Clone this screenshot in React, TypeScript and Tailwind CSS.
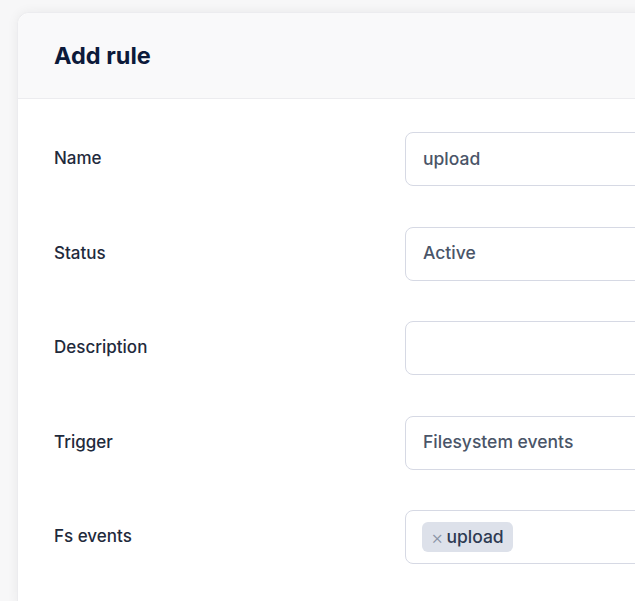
import React from "react";

const fields = [
  { label: "Name", value: "upload" },
  { label: "Status", value: "Active" },
  { label: "Description", value: "" },
  { label: "Trigger", value: "Filesystem events" },
];

export default function App() {
  return (
    <div
      className="min-h-screen w-full overflow-hidden bg-[#f7f7f8] pl-[17px] pt-3"
      style={{ fontFamily: "Inter, 'Noto Sans', sans-serif" }}
    >
      <div className="w-[900px] rounded-tl-xl border border-[#ececef] bg-white shadow-[0_0_12px_rgba(0,0,0,0.06)]">
        {/* Header */}
        <div className="flex h-[86px] items-center rounded-tl-xl border-b border-[#ececef] bg-[#f9f9fa] px-9">
          <h2 className="text-[23.5px] font-bold text-[#0c1a3a]">Add rule</h2>
        </div>

        {/* Form */}
        <div className="flex flex-col gap-[40.5px] px-9 pt-[33px] pb-10">
          {fields.map((f) => (
            <div key={f.label} className="grid grid-cols-[351px_1fr] items-center">
              <span className="text-[17px] font-medium text-[#1f2a3c]">{f.label}</span>
              <div className="flex h-[54px] items-center rounded-lg border border-[#d6d9e4] px-[17px] text-[17.5px] font-medium text-[#4a5568]">
                {f.value}
              </div>
            </div>
          ))}
          <div className="grid grid-cols-[351px_1fr] items-center">
            <span className="text-[17px] font-medium text-[#1f2a3c]">Fs events</span>
            <div className="flex h-[54px] items-center rounded-lg border border-[#d6d9e4] px-4">
              <span className="flex h-[30px] items-center gap-[3px] rounded-md bg-[#dde1ea] px-[9px] text-[17.5px] font-medium text-[#2d3a52]">
                <span className="text-[19px] font-light leading-none text-[#8a93a6]">×</span>
                upload
              </span>
            </div>
          </div>
        </div>
      </div>
    </div>
  );
}
